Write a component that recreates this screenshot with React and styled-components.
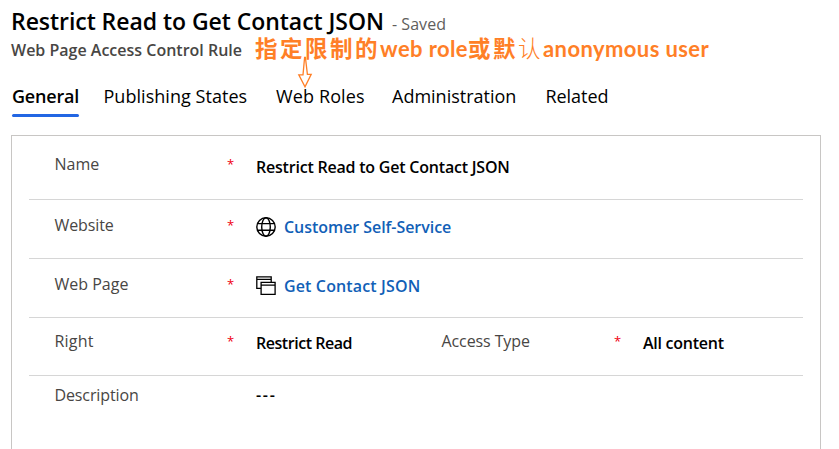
import React from 'react';
import styled, { createGlobalStyle } from 'styled-components';

const GlobalStyle = createGlobalStyle`
  * { box-sizing: border-box; }
  html, body { margin: 0; background: #fff; overflow: hidden; }
  body { font-family: "Open Sans", "Noto Sans", "Noto Sans CJK SC", sans-serif; color: #000; }
`;

const Page = styled.main`
  width: 839px;
  height: 449px;
  overflow: hidden;
  display: flex;
  flex-direction: column;
  padding: 6px 18px 0 11px;
  background: #fff;
`;

const TitleRow = styled.header`
  display: flex;
  align-items: baseline;
  height: 30px;
  white-space: nowrap;
`;

const Title = styled.h1`
  margin: 0;
  font-size: 23px;
  font-weight: 600;
  line-height: 30px;
  letter-spacing: -0.05px;
`;

const SaveState = styled.span`
  margin-left: 8px;
  font-size: 16px;
  letter-spacing: 0.05px;
  color: #605e5c;
`;

const SubRow = styled.div`
  position: relative;
  display: flex;
  align-items: flex-start;
  height: 26px;
  margin-top: 3px;
  white-space: nowrap;
`;

const Subtitle = styled.h2`
  margin: 0;
  width: 244px;
  font-size: 16px;
  font-weight: 600;
  line-height: 22px;
  letter-spacing: 0;
  color: #484644;
`;

const Note = styled.div`
  display: flex;
  align-items: baseline;
  height: 22px;
  margin-top: -3px;
  font-family: Lato, "Noto Sans CJK SC", sans-serif;
  font-size: 22px;
  font-weight: 700;
  line-height: 22px;
  letter-spacing: 0.4px;
  color: #ff7f27;
  white-space: pre;
`;

const Han = styled.span`
  font-family: "Noto Sans CJK SC", sans-serif;
  font-size: 22.5px;
  font-weight: ${(p) => (p.$thin ? 300 : 700)};
  letter-spacing: 2.5px;
`;

const Arrow = styled.svg`
  position: absolute;
  left: 286px;
  top: 17px;
`;

const TabList = styled.nav`
  display: flex;
  height: 33px;
  margin-top: 19px;
  padding-left: 1px;
  white-space: nowrap;
`;

const Tab = styled.a`
  width: ${(p) => p.$width}px;
  margin-right: ${(p) => p.$gap}px;
  font-size: 18px;
  line-height: 24px;
  font-weight: ${(p) => (p.$active ? 600 : 400)};
  letter-spacing: ${(p) => p.$track}px;

  &::after {
    content: "";
    display: block;
    height: 3px;
    margin-top: 6px;
    border-radius: 2px;
    background: ${(p) => (p.$active ? '#2266e3' : 'transparent')};
  }
`;

const Panel = styled.section`
  flex: 1;
  margin-top: 18px;
  padding: 0 17px;
  border: 1px solid #c8c6c4;
  border-bottom: 0;
`;

const Row = styled.div`
  display: grid;
  grid-template-columns: 172px 29px 186px 172px 29px 1fr;
  align-items: start;
  height: ${(p) => p.$height}px;
  padding: ${(p) => p.$top}px 0 0 26px;
  border-bottom: ${(p) => (p.$last ? '0' : '1px solid #d6d6d6')};
  font-size: 16px;
  line-height: 22px;
  white-space: nowrap;
`;

const Label = styled.span`
  margin-left: -0.5px;
  color: #484644;
  letter-spacing: ${(p) => p.$track || 0}px;
`;

const Required = styled.span`
  font-size: 13px;
  line-height: 22px;
  color: #f00010;
`;

const Value = styled.span`
  display: flex;
  align-items: center;
  gap: 8px;
  margin-top: ${(p) => p.$drop}px;
  font-weight: 600;
  letter-spacing: ${(p) => p.$track || 0}px;
  color: ${(p) => (p.$lookup ? '#1160b7' : '#000')};
`;

const Glyph = styled.svg`
  flex: none;
  width: 20px;
  height: 20px;
  fill: none;
  stroke: #000;
`;

const GlobeIcon = () => (
  <Glyph viewBox="0 0 20 20" strokeWidth="1.4">
    <circle cx="10" cy="10" r="9.2" />
    <ellipse cx="10" cy="10" rx="4.3" ry="9.2" />
    <path d="M1.5 6.6h17M1.5 13.3h17" />
  </Glyph>
);

const PagesIcon = () => (
  <Glyph viewBox="0 0 20 20" strokeWidth="1.3">
    <path d="M5 12.4H.8V.8h14.4v5.6M.8 3.4h14.4" />
    <path d="M5.1 6.4h14v11.9h-14zM5.1 9.2h14" />
  </Glyph>
);

const tabs = [
  { text: 'General', width: 67, gap: 24.5, track: -0.2, active: true },
  { text: 'Publishing States', width: 144, gap: 28.5, track: 0.04 },
  { text: 'Web Roles', width: 90, gap: 26, track: 0.12 },
  { text: 'Administration', width: 126, gap: 27.5, track: 0 },
  { text: 'Related', width: 64, gap: 0, track: -0.05 },
];

const rows = [
  {
    height: 64, top: 17,
    fields: [{ label: 'Name', required: true, value: 'Restrict Read to Get Contact JSON', drop: 3, track: -0.21 }],
  },
  {
    height: 59, top: 14,
    fields: [{ label: 'Website', labelTrack: -0.1, required: true, value: 'Customer Self-Service', icon: GlobeIcon, drop: 2, track: -0.05 }],
  },
  {
    height: 59, top: 14,
    fields: [{ label: 'Web Page', required: true, value: 'Get Contact JSON', icon: PagesIcon, drop: 2, track: 0.14 }],
  },
  {
    height: 58, top: 12,
    fields: [
      { label: 'Right', labelTrack: 0.2, required: true, value: 'Restrict Read', drop: 2, track: -0.46 },
      { label: 'Access Type', labelTrack: -0.1, required: true, value: 'All content', drop: 2, track: -0.26 },
    ],
  },
  {
    height: 72, top: 8,
    fields: [{ label: 'Description', labelTrack: -0.12, value: '---', drop: 0, track: 1.7 }],
  },
];

function Field({ field }) {
  const Icon = field.icon;
  return (
    <>
      <Label $track={field.labelTrack}>{field.label}</Label>
      <Required>{field.required ? '*' : ''}</Required>
      <Value $drop={field.drop} $track={field.track} $lookup={Boolean(Icon)}>
        {Icon && <Icon />}
        {field.value}
      </Value>
    </>
  );
}

export default function App() {
  return (
    <Page>
      <GlobalStyle />
      <TitleRow>
        <Title>Restrict Read to Get Contact JSON</Title>
        <SaveState>- Saved</SaveState>
      </TitleRow>
      <SubRow>
        <Subtitle>Web Page Access Control Rule</Subtitle>
        <Note>
          <Han>指定限制的</Han>web role<Han>或默</Han><Han $thin>认</Han>anonymous user
        </Note>
        <Arrow width="16" height="33" viewBox="0 0 16 33" fill="#fff" stroke="#ff7f27" strokeWidth="1.3">
          <path d="M7.6 1.5L6 18.8H1.8L8 30.8L14.2 18.3H10.4L8.4 1.5Z" />
        </Arrow>
      </SubRow>
      <TabList>
        {tabs.map((t) => (
          <Tab key={t.text} $width={t.width} $gap={t.gap} $track={t.track} $active={t.active}>
            {t.text}
          </Tab>
        ))}
      </TabList>
      <Panel>
        {rows.map((r, i) => (
          <Row key={r.fields[0].label} $height={r.height} $top={r.top} $last={i === rows.length - 1}>
            {r.fields.map((f) => (
              <Field key={f.label} field={f} />
            ))}
          </Row>
        ))}
      </Panel>
    </Page>
  );
}
